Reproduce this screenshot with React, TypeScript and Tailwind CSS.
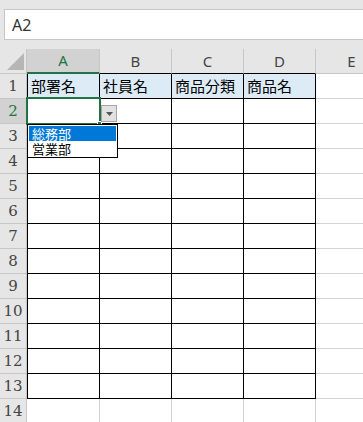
import React from 'react';

const COLS = ['A', 'B', 'C', 'D', 'E'];
const COL_W = ['w-[73px]', 'w-[72px]', 'w-[72px]', 'w-[72px]', 'w-[72px]'];
const HEAD_ROW = ['部署名', '社員名', '商品分類', '商品名', ''];
const ROWS = Array.from({ length: 14 }, (_, i) => i + 1);

const jp = { fontFamily: '"Noto Sans CJK JP", "Noto Sans", sans-serif' };
const ui = { fontFamily: '"Noto Sans", "Liberation Sans", sans-serif' };

export default function App() {
  return (
    <div className="relative h-[422px] w-[363px] overflow-hidden bg-white" style={ui}>
      {/* Name box */}
      <div className="h-[49px] bg-[#e6e6e6] pl-1 pt-[9px]">
        <div className="flex h-[31px] items-center border border-r-0 border-[#c6c6c6] bg-white pl-[7px] text-[16px] text-[#333]">
          A2
        </div>
      </div>

      {/* Column headers */}
      <div className="flex h-[25px]">
        <div className="relative w-[27px] shrink-0 border-r border-b border-[#c6c6c6] bg-[#e6e6e6]">
          <svg className="absolute right-[2px] bottom-[3px]" width="17" height="17" viewBox="0 0 17 17">
            <polygon points="17,0 17,17 0,17" fill="#b6b6b6" />
          </svg>
        </div>
        {COLS.map((c, i) => (
          <ColHead key={c} label={c} width={COL_W[i]} index={i} />
        ))}
      </div>

      {/* Rows */}
      {ROWS.map((r) => (
        <Row key={r} n={r} />
      ))}

      {/* Selection on A2 */}
      <div className="absolute top-[97px] left-[26px] h-[28px] w-[75px] border-2 border-[#217346]" />
      <div className="absolute top-[121px] left-[97px] h-[5px] w-[5px] border border-white bg-[#217346]" />

      {/* Dropdown button */}
      <div className="absolute top-[105px] left-[101px] flex h-[17px] w-[16px] items-center justify-center border border-[#a6a6a6] bg-[#e1e1e1]">
        <svg width="7" height="4" viewBox="0 0 7 4">
          <polygon points="0,0 7,0 3.5,4" fill="#555" />
        </svg>
      </div>

      {/* Dropdown list */}
      <div className="absolute top-[124px] left-[27px] w-[91px] border border-black bg-white p-px" style={jp}>
        <div className="h-[15px] bg-[#0078d7] pl-[3px] text-[13px] leading-[15px] text-white">総務部</div>
        <div className="h-[15px] pl-[3px] text-[13px] leading-[15px] text-black">営業部</div>
      </div>
    </div>
  );
}

function ColHead({ label, width, index }: { label: string; width: string; index: number }) {
  const selected = index === 0;
  const bottom = selected
    ? 'border-b-2 border-b-[#217346]'
    : index < 4
      ? 'border-b border-b-black'
      : 'border-b border-b-[#c6c6c6]';
  return (
    <div
      className={`${width} flex shrink-0 items-center justify-center border-r border-r-[#c6c6c6] ${bottom} text-[15px] ${
        selected ? 'bg-[#d2d2d2] text-[#217346]' : 'bg-[#e6e6e6] text-[#444]'
      }`}
    >
      {label}
    </div>
  );
}

function Row({ n }: { n: number }) {
  const inData = n <= 13;
  const selected = n === 2;
  return (
    <div className="flex h-[25px]">
      <div
        className={`flex w-[27px] shrink-0 items-center justify-center border-r border-b border-[#c6c6c6] ${
          selected ? 'bg-[#d2d2d2] text-[#217346]' : 'bg-[#e6e6e6] text-[#444]'
        }`}
        style={{ fontFamily: '"DejaVu Serif", "Liberation Serif", serif', fontSize: 15 }}
      >
        {n}
      </div>
      {COLS.map((c, i) => {
        const dataCell = inData && i < 4;
        const leftBorder = i === 0 && inData ? 'border-l border-l-black' : '';
        const rightBorder = dataCell ? 'border-r-black' : 'border-r-[#d4d4d4]';
        const bottomBorder = dataCell ? 'border-b-black' : 'border-b-[#d4d4d4]';
        const bg = n === 1 && i < 4 ? 'bg-[#ddebf7]' : 'bg-white';
        return (
          <div
            key={c}
            className={`${COL_W[i]} flex shrink-0 items-center border-r border-b ${rightBorder} ${bottomBorder} ${leftBorder} ${bg} pl-[3px] text-[15px] text-black`}
            style={jp}
          >
            {n === 1 ? HEAD_ROW[i] : ''}
          </div>
        );
      })}
    </div>
  );
}
